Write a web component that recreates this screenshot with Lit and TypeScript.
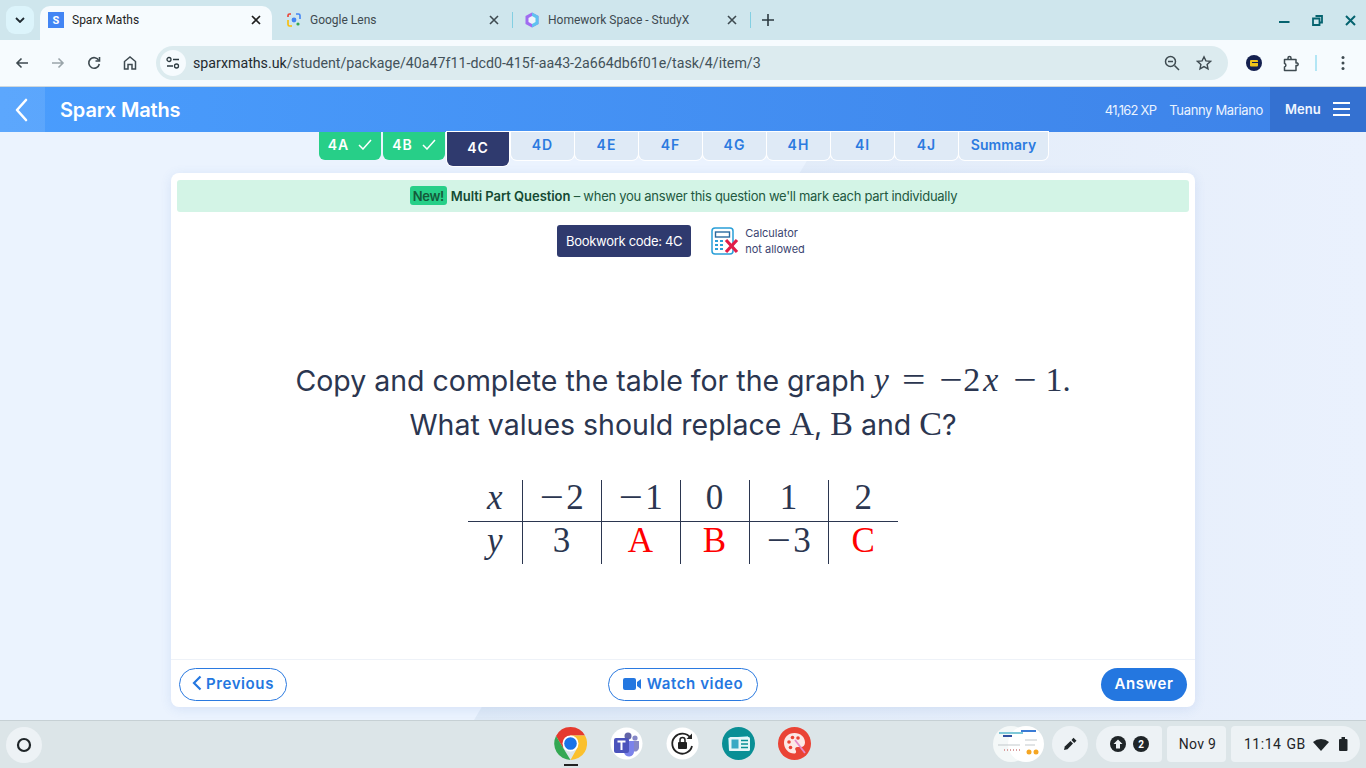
import { LitElement, html, css, svg } from "lit";
import { customElement } from "lit/decorators.js";

const ic = (w: number, h: number, body: unknown, vb = `0 0 ${w} ${h}`) =>
  html`<svg width=${w} height=${h} viewBox=${vb} fill="none" style="display:block;flex:none">${body}</svg>`;

@customElement("app-root")
export class AppRoot extends LitElement {
  static styles = css`
    :host { display: flex; flex-direction: column; width: 1366px; height: 768px; overflow: hidden; font-family: "Roboto", sans-serif; color: #1f1f1f; }
    .tabstrip { height: 40px; background: #cfe6ed; display: flex; align-items: flex-end; flex: none; position: relative; }
    .tabdrop { width: 28px; height: 28px; margin: 0 0 6px 6px; background: #dcf4fb; border-radius: 9px; display: flex; align-items: center; justify-content: center; flex: none; }
    .tab { height: 34px; display: flex; align-items: center; font-size: 12px; color: #3e4a50; flex: none; box-sizing: border-box; padding-bottom: 6px; }
    .tab.active { width: 232px; margin-left: 6px; background: #f6fbfe; border-radius: 10px 10px 0 0; color: #1f1f1f; padding: 0 11px 6px 8px; }
    .tab.active .fav { background: #4285f4; color: #fff; width: 16px; height: 16px; font: 700 11px "Roboto"; display: flex; align-items: center; justify-content: center; margin-right: 8px; }
    .tab.t2 { width: 240px; padding-left: 15px; padding-right: 13px; }
    .tab.t3 { width: 237px; padding-left: 12px; padding-right: 13px; }
    .tab .fav2 { margin-right: 9px; }
    .tab .title { flex: 1; white-space: nowrap; }
    .sep { width: 1px; height: 16px; background: #83cfe2; flex: none; margin-bottom: 12px; }
    .plus { margin: 0 0 14px 11px; }
    .winctl { position: absolute; right: 0; top: 0; height: 40px; display: flex; align-items: center; }
    .winctl span { display: flex; width: 32px; justify-content: center; }
    .winctl span.min { margin-right: 1px; }
    .winctl span.max { margin-right: 1px; }
    .toolbar { height: 47px; background: #f6fbfe; display: flex; align-items: center; flex: none; box-sizing: border-box; border-bottom: 1px solid #cfd8dc; position: relative; }
    .navs { display: flex; width: 156px; flex: none; padding-left: 14px; box-sizing: border-box; gap: 20px; align-items: center; }
    .omni { width: 1072px; height: 34px; border-radius: 17px; background: #dcebef; display: flex; align-items: center; flex: none; box-sizing: border-box; padding: 0 16px 0 4px; }
    .omni .tune { width: 26px; height: 26px; border-radius: 50%; background: #f6fbfe; display: flex; align-items: center; justify-content: center; margin-right: 7px; }
    .url { flex: 1; font-size: 14.22px; color: #43525a; white-space: nowrap; }
    .url b { font-weight: 400; color: #1f2a30; }
    .omni .icons { display: flex; gap: 16px; align-items: center; }
    .tright { display: flex; align-items: center; margin-left: 18px; }
    .avatar { width: 16px; height: 16px; border-radius: 50%; background: #14204f; display: flex; align-items: center; justify-content: center; }
    .tspace { width: 21px; }
    .vsep { width: 2px; height: 16px; background: #b3e6f5; margin: 0 24px 0 15px; }

    .app { flex: 1; position: relative; display: flex; flex-direction: column; min-height: 0; font-family: "Inter", sans-serif; background: #ebf3fe; overflow: hidden; }
    .bgshape { position: absolute; left: 0; top: 45px; width: 1366px; height: 588px; }
    .topbar { height: 45px; flex: none; display: flex; align-items: stretch; color: #fff; background: linear-gradient(90deg, #4a9dfd 0%, #3d82e8 100%); position: relative; z-index: 2; }
    .back { width: 45px; background: rgba(255,255,255,.1); display: flex; align-items: center; justify-content: center; flex: none; padding-right: 3px; box-sizing: border-box; }
    .brand { font-size: 20px; font-weight: 600; letter-spacing: -0.15px; margin-left: 15px; align-self: center; flex: 1; }
    .xp, .user { align-self: center; font-size: 13px; color: #eaf3ff; letter-spacing: -0.35px; }
    .xp { letter-spacing: -0.75px; }
    .user { margin: 0 7px 0 13px; }
    .menu { width: 96px; background: #3471d1; display: flex; align-items: center; justify-content: space-between; padding: 0 15px 1px; box-sizing: border-box; font-size: 13px; font-weight: 600; color: #f0f6ff; }
    .tabs { display: flex; flex: none; height: 34px; gap: 1px; padding-left: 319px; position: relative; z-index: 2; align-items: flex-start; font-weight: 600; font-size: 14px; letter-spacing: 1px; }
    .stab { box-sizing: border-box; width: 63px; height: 28px; padding-bottom: 3px; background: #dfeaf6; color: #2b7ae0; display: flex; align-items: center; justify-content: center; border-radius: 0 0 6px 6px; box-shadow: 0 0 0 1px #fff; }
    .stab.done { width: 62px; margin-right: 1px; background: #27cf88; color: #fff; gap: 9px; box-shadow: none; }
    .stab.cur { width: 62px; margin-right: 1px; background: #2f3a6e; color: #fff; height: 34px; }
    .stab.sum { width: 89px; letter-spacing: 0.1px; }
    .card { position: relative; z-index: 2; margin: 7px 0 0 171px; width: 1024px; height: 534px; background: #fff; border-radius: 8px; box-shadow: 0 2px 12px rgba(60,110,200,.12); display: flex; flex-direction: column; box-sizing: border-box; }
    .banner { margin: 7px 6px 0 6px; height: 32px; padding: 0 0 1px 1px; box-sizing: border-box; background: #d3f4e6; border-radius: 3px; display: flex; align-items: center; justify-content: center; font-size: 13px; color: #22593f; letter-spacing: -0.28px; flex: none; white-space: pre; }
    .new { background: #27cf88; color: #145a3a; border-radius: 3px; font-weight: 600; padding: 0 1px; height: 19px; width: 37px; box-sizing: border-box; display: flex; align-items: center; justify-content: center; margin-right: 4px; letter-spacing: -0.3px; }
    .banner strong { font-weight: 600; color: #144a33; letter-spacing: -0.05px; }
    .book { display: flex; justify-content: center; align-items: center; margin-top: 13px; height: 32px; padding-right: 4px; flex: none; }
    .code { width: 134px; height: 32px; background: #2f3a6e; color: #fff; border-radius: 3px; font-size: 13px; display: flex; align-items: center; justify-content: center; letter-spacing: -0.3px; }
    .calc { display: flex; align-items: center; margin-left: 20px; gap: 5px; }
    .calc div { font-size: 11px; line-height: 16px; color: #3a4470; }
    .q { flex: 1; display: flex; flex-direction: column; align-items: center; padding-top: 102px; color: #2b3650; font-size: 28.5px; line-height: 44px; min-height: 0; }
    .q div { white-space: pre; }
    .m { font-family: "Liberation Serif", serif; font-size: 34px; line-height: 0; }
    .mi { font-style: italic; }
    .op { display: inline-block; transform: scaleX(1.22); line-height: 0; }
    .eq { margin-left: 15px; }
    .neg { margin-left: 18px; }
    .two { margin-left: 3px; }
    .xv { margin-left: 3px; }
    .neg2 { margin-left: 17px; }
    .one { margin-left: 11px; }
    table { border-collapse: collapse; margin-top: 33px; font-family: "Liberation Serif", serif; font-size: 35px; color: #2b3650; line-height: 34px; }
    td { padding: 0 0 4px; text-align: center; border-left: 1px solid #2b3650; box-sizing: border-box; }
    td .op { margin: 0 4px 0 3px; }
    tr:first-child td { height: 41px; border-bottom: 1px solid #2b3650; }
    tr:last-child td { height: 43px; }
    td:first-child { border-left: none; width: 54px; font-style: italic; }
    .r { color: #f00; }
    .foot { height: 46px; padding: 1px 8px 0; flex: none; border-top: 1px solid #eef2f8; display: flex; align-items: center; justify-content: space-between; position: relative; }
    .btn { height: 33px; padding-bottom: 2px; box-sizing: border-box; border: 1px solid #2b7ae0; border-radius: 17px; color: #2477e0; font-size: 15px; font-weight: 600; letter-spacing: 0.6px; display: flex; align-items: center; justify-content: center; background: #fff; }
    .prev { width: 108px; gap: 4px; }
    .watch { width: 150px; gap: 6px; position: absolute; left: 437px; top: 8px; }
    .ans { width: 86px; background: #2477e0; color: #fff; border: none; }

    .shelf { height: 48px; flex: none; background: #dce5e8; border-top: 1px solid #c6d0d4; box-sizing: border-box; position: relative; display: flex; align-items: center; }
    .launcher { width: 36px; height: 36px; border-radius: 50%; background: #edf2f5; margin-left: 6px; display: flex; align-items: center; justify-content: center; flex: none; }
    .apps { position: absolute; left: 554px; top: 6px; display: flex; gap: 23px; }
    .app-i { width: 33px; height: 33px; position: relative; flex: none; }
    .app-i svg { display: block; }
    .run { position: absolute; left: 564px; top: 43px; width: 14px; height: 2px; background: #222; }
    .tray { position: absolute; right: 6px; top: 5px; height: 36px; display: flex; gap: 5px; align-items: center; color: #1f2528; font-size: 14px; font-family: "Roboto", sans-serif; }
    .pill { height: 36px; background: #edf2f5; display: flex; align-items: center; justify-content: center; box-sizing: border-box; }
    .thumb { width: 51px; height: 36px; margin-right: 3px; }
    .pen { width: 36px; border-radius: 18px; margin-right: 3px; }
    .up { width: 66px; border-radius: 18px 4px 4px 18px; gap: 7px; }
    .date { width: 59px; border-radius: 4px; letter-spacing: .3px; padding-left: 2px; }
    .time { width: 129px; border-radius: 4px 18px 18px 4px; justify-content: flex-start; padding-left: 13px; letter-spacing: .5px; }
    .gb { margin-left: 5px; margin-right: 7px; }
    .bat { margin-left: 10px; }
  `;

  render() {
    return html`
      <div class="tabstrip">
        <div class="tabdrop">${ic(10, 6, svg`<path d="M1 1l4 4 4-4" stroke="#1f2a30" stroke-width="1.8"/>`)}</div>
        <div class="tab active"><span class="fav">S</span><span class="title">Sparx Maths</span>
          ${ic(10, 10, svg`<path d="M1 1l8 8M9 1l-8 8" stroke="#1f1f1f" stroke-width="1.7"/>`)}</div>
        <div class="tab t2"><span class="fav2">${ic(14, 14, svg`
            <path d="M4 1H2.500A1.500 1.500 0 0 0 1 2.500V4" stroke="#ea4335" stroke-width="1.6"/>
            <path d="M1 7v4.500A1.500 1.500 0 0 0 2.500 13H5" stroke="#fbbc04" stroke-width="1.6"/>
            <path d="M9 1h2.500A1.500 1.500 0 0 1 13 2.500V6" stroke="#4285f4" stroke-width="1.6"/>
            <circle cx="7" cy="7" r="2.400" fill="#4285f4"/><circle cx="11" cy="11" r="1.600" fill="#34a853"/>`)}</span>
          <span class="title">Google Lens</span>
          ${ic(10, 10, svg`<path d="M1 1l8 8M9 1l-8 8" stroke="#3e4a50" stroke-width="1.6"/>`)}</div>
        <div class="sep"></div>
        <div class="tab t3"><span class="fav2">${ic(14, 16, svg`
            <path d="M7 .5l6.500 3.500v8L7 15.500.5 12V4z" fill="#a06cf0"/><path d="M7 .5l6.500 3.500v8L7 15.500z" fill="#5ec3f0"/>
            <path d="M7 4l3.500 2v4L7 12l-3.500-2V6z" fill="#eef6fb"/>`)}</span>
          <span class="title">Homework Space - StudyX</span>
          ${ic(10, 10, svg`<path d="M1 1l8 8M9 1l-8 8" stroke="#3e4a50" stroke-width="1.6"/>`)}</div>
        <div class="sep"></div>
        <div class="plus">${ic(12, 12, svg`<path d="M6 0v12M0 6h12" stroke="#2c3a40" stroke-width="1.600"/>`)}</div>
        <div class="winctl">
          <span class="min">${ic(11, 11, svg`<path d="M0 6h10.500" stroke="#05636f" stroke-width="2"/>`, "0 -1 11 11")}</span>
          <span class="max">${ic(11, 11, svg`<path d="M3.500 1h6.500v6.500H8M1 3.500h6.500V10H1z" stroke="#05636f" stroke-width="1.800"/>`)}</span>
          <span>${ic(11, 11, svg`<path d="M1 1l9 9M10 1l-9 9" stroke="#05636f" stroke-width="2"/>`)}</span>
        </div>
      </div>
      <div class="toolbar">
        <div class="navs">
          ${ic(16, 16, svg`<path d="M14 8H3M7.500 3.500L3 8l4.500 4.500" stroke="#3e4a50" stroke-width="1.600"/>`)}
          ${ic(16, 16, svg`<path d="M2 8h11M8.500 3.500L13 8l-4.500 4.500" stroke="#9aa5aa" stroke-width="1.600"/>`)}
          ${ic(16, 16, svg`<path d="M12.800 5.500A5.300 5.300 0 1 0 13.300 9" stroke="#3e4a50" stroke-width="1.600"/><path d="M13.500 2v4h-4" stroke="#3e4a50" stroke-width="1.600"/>`)}
          ${ic(16, 16, svg`<path d="M2.500 14V6.500L8 2l5.500 4.500V14H10V9.500H6V14z" stroke="#3e4a50" stroke-width="1.500"/>`)}
        </div>
        <div class="omni">
          <div class="tune">${ic(14, 14, svg`<circle cx="3" cy="3.500" r="2" stroke="#2c3a40" stroke-width="1.300"/><path d="M7 3.500h6M1 10h6" stroke="#2c3a40" stroke-width="1.500"/><circle cx="10.500" cy="10" r="2" stroke="#2c3a40" stroke-width="1.300"/>`)}</div>
          <div class="url"><b>sparxmaths.uk</b>/student/package/40a47f11-dcd0-415f-aa43-2a664db6f01e/task/4/item/3</div>
          <div class="icons">
            ${ic(16, 16, svg`<circle cx="6.500" cy="6.500" r="5" stroke="#3e4a50" stroke-width="1.500"/><path d="M4 6.500h5M10.500 10.500L15 15" stroke="#3e4a50" stroke-width="1.500"/>`)}
            ${ic(16, 16, svg`<path d="M8 1.800l1.900 4.100 4.500.5-3.300 3 .9 4.400L8 11.600l-4 2.200.9-4.400-3.300-3 4.500-.5z" stroke="#3e4a50" stroke-width="1.400"/>`)}
          </div>
        </div>
        <div class="tright">
          <div class="avatar">${ic(8, 8, svg`<rect y="1" width="8" height="6.500" rx="1" fill="#f0c419"/><rect x="2" y="3" width="6" height="1" fill="#14204f"/>`)}</div>
          <span class="tspace"></span>
          ${ic(17, 17, svg`<path d="M1.500 4.500h11.500V8h1.500a1.500 1.500 0 0 1 0 2.500H13V15.500H1.500v-3.500a1.800 1.800 0 0 0 0-3.500z" stroke="#3e4a50" stroke-width="1.500" stroke-linejoin="round"/><path d="M5 4.500V3a1.500 1.500 0 0 1 3 0v1.500" stroke="#3e4a50" stroke-width="1.500"/>`)}
          <div class="vsep"></div>
          ${ic(4, 16, svg`<circle cx="2" cy="2.500" r="1.500" fill="#3e4a50"/><circle cx="2" cy="8" r="1.500" fill="#3e4a50"/><circle cx="2" cy="13.500" r="1.500" fill="#3e4a50"/>`)}
        </div>
      </div>

      <div class="app">
        <svg class="bgshape" viewBox="0 0 1366 588" fill="none">
          <defs><linearGradient id="sh" x1="474" y1="0" x2="1366" y2="0" gradientUnits="userSpaceOnUse"><stop offset="0" stop-color="#dee9f6"/><stop offset="1" stop-color="#eaf1fd"/></linearGradient></defs>
          <path d="M824 0H1366V588H474z" fill="url(#sh)"/>
        </svg>
        <div class="topbar">
          <div class="back">${ic(14, 24, svg`<path d="M12 2L3 12l9 10" stroke="#fff" stroke-width="2.600" stroke-linecap="round" stroke-linejoin="round"/>`)}</div>
          <div class="brand">Sparx Maths</div>
          <div class="xp">41,162 XP</div>
          <div class="user">Tuanny Mariano</div>
          <div class="menu">Menu ${ic(18, 16, svg`<path d="M0 2h17M0 8h17M0 14h17" stroke="#fff" stroke-width="2"/>`)}</div>
        </div>
        <div class="tabs">
          ${["4A", "4B"].map((t) => html`<div class="stab done">${t}${ic(14, 11, svg`<path d="M1 6l4 4 8-9" stroke="#fff" stroke-width="1.500"/>`)}</div>`)}
          <div class="stab cur">4C</div>
          ${["4D", "4E", "4F", "4G", "4H", "4I", "4J"].map((t) => html`<div class="stab">${t}</div>`)}
          <div class="stab sum">Summary</div>
        </div>
        <div class="card">
          <div class="banner"><span class="new">New!</span><strong>Multi Part Question</strong> – when you answer this question we'll mark each part individually</div>
          <div class="book">
            <div class="code">Bookwork code: 4C</div>
            <div class="calc">
              ${ic(29, 28, svg`
                <rect x="1" y="1" width="21" height="26" rx="3" stroke="#2a9fd8" stroke-width="1.500"/>
                <rect x="4.500" y="5" width="14" height="5" stroke="#2b6a9f" stroke-width="1.400"/>
                <path d="M4 14h3M9 14h3M4 18h3M9 18h3M4 22h3M9 22h3" stroke="#2a9fd8" stroke-width="1.800"/>
                <path d="M15 13l11 12M26 13L15 25" stroke="#e11d48" stroke-width="3.200"/>`)}
              <div>Calculator<br />not allowed</div>
            </div>
          </div>
          <div class="q">
            <div>Copy and complete the table for the graph <span class="m"><span class="mi">y</span><span class="op eq">=</span><span class="op neg">−</span><span class="two">2</span><span class="mi xv">x</span><span class="op neg2">−</span><span class="one">1</span></span>.</div>
            <div>What values should replace <span class="m">A</span>, <span class="m">B</span> and <span class="m">C</span>?</div>
            <table>
              <tr><td>x</td><td style="width:79px"><span class="op">−</span>2</td><td style="width:79px"><span class="op">−</span>1</td><td style="width:69px">0</td><td style="width:79px">1</td><td style="width:70px">2</td></tr>
              <tr><td>y</td><td>3</td><td class="r">A</td><td class="r">B</td><td><span class="op">−</span>3</td><td class="r">C</td></tr>
            </table>
          </div>
          <div class="foot">
            <div class="btn prev">${ic(10, 16, svg`<path d="M8.500 1.500L2 8l6.500 6.500" stroke="#2477e0" stroke-width="2.200"/>`)}Previous</div>
            <div class="btn watch">${ic(18, 12, svg`<rect width="13" height="12" rx="2" fill="#2477e0"/><path d="M14 4l4-3v10l-4-3z" fill="#2477e0"/>`)}Watch video</div>
            <div class="btn ans">Answer</div>
          </div>
        </div>
      </div>

      <div class="shelf">
        <div class="launcher">${ic(16, 16, svg`<circle cx="8" cy="8" r="6" stroke="#1f2528" stroke-width="2.200"/>`)}</div>
        <div class="apps">
          <div class="app-i">${ic(33, 33, svg`
            <path d="M16.500 0A16.500 16.500 0 0 1 31 8.500H16.500L9 21 2 9A16.500 16.500 0 0 1 16.500 0z" fill="#e5392e"/>
            <path d="M2 9l7.500 12.500 7 11.500A16.500 16.500 0 0 1 2 9z" fill="#34a853"/>
            <path d="M31 8.500A16.500 16.500 0 0 1 16.500 33l7-12.500-7-12z" fill="#fbc02d"/>
            <circle cx="16.500" cy="16.500" r="8" fill="#fff"/><circle cx="16.500" cy="16.500" r="6.300" fill="#1a73e8"/>`)}</div>
          <div class="app-i">${ic(33, 33, svg`
            <circle cx="16.500" cy="16.500" r="16" fill="#fff"/>
            <circle cx="18" cy="9" r="3.500" fill="#6264a7"/><circle cx="25" cy="11" r="2.600" fill="#8688c7"/>
            <path d="M21 14h8v7a4 4 0 0 1-6 3z" fill="#8688c7"/><path d="M13 14h11v10a5 5 0 0 1-10 1z" fill="#7b83eb"/>
            <rect x="4" y="11" width="15" height="15" rx="2" fill="#4b53bc"/>
            <path d="M7.500 14.500h8M11.500 14.500V23" stroke="#fff" stroke-width="2"/>`)}</div>
          <div class="app-i">${ic(33, 33, svg`
            <circle cx="16.500" cy="16.500" r="16" fill="#fff"/>
            <path d="M24.500 11A10 10 0 1 0 26 19" stroke="#222" stroke-width="1.800"/><path d="M26 6.500V12h-5.500" fill="#222"/>
            <rect x="12" y="15" width="9" height="7" rx="1" fill="#222"/><path d="M14 15v-2a2.500 2.500 0 0 1 5 0v2" stroke="#222" stroke-width="1.500"/>`)}</div>
          <div class="app-i">${ic(33, 33, svg`
            <circle cx="16.500" cy="16.500" r="16.500" fill="#0a8f95"/>
            <path d="M6 11l20-2 1 13-20 2z" fill="#8fd3e0"/><rect x="7" y="10" width="21" height="14" rx="1.500" fill="#e8f6f8"/>
            <rect x="9.500" y="12.500" width="7" height="9" fill="#39a9c4"/><path d="M19 13.500h7M19 17h7M19 20.500h7" stroke="#0a8f95" stroke-width="1.600"/>`)}</div>
          <div class="app-i">${ic(33, 33, svg`
            <circle cx="16.500" cy="16.500" r="16.500" fill="#ea4335"/>
            <path d="M16.500 6C10 6 6 10.500 6 16s4.500 10.500 10 10.500c2.500 0 2.500-2 1.500-3.500s0-3 2-3h3.500c2.500 0 4-2 4-4.500C27 10 22.500 6 16.500 6z" fill="#fce8e6"/>
            <circle cx="11" cy="15" r="1.800" fill="#ea4335"/><circle cx="14.500" cy="10.500" r="1.800" fill="#ea4335"/><circle cx="20" cy="11" r="1.800" fill="#ea4335"/><circle cx="12.500" cy="20.500" r="1.800" fill="#ea4335"/>
            <path d="M17 13l10 13" stroke="#e58acb" stroke-width="1.800"/>`)}</div>
        </div>
        <div class="run"></div>
        <div class="tray">
          <div class="thumb">${ic(51, 36, svg`
            <circle cx="18" cy="18" r="18" fill="#f4f8f8"/><circle cx="33" cy="18" r="18" fill="#fff"/>
            <path d="M6 7h24" stroke="#7fc8d8" stroke-width="2"/><path d="M28 5h15" stroke="#3a7bd5" stroke-width="2"/><path d="M10 10h9" stroke="#2f4f9f" stroke-width="2"/>
            <path d="M5 19h22M32 14h12M32 19h10" stroke="#c3c9cc" stroke-width="1"/>
            <path d="M11 24h16" stroke="#d9a0a0" stroke-width="2" stroke-dasharray="1 2"/>
            <circle cx="36" cy="26" r="2.500" fill="#f5a623"/><circle cx="43" cy="26" r="2.500" fill="#f5a623"/>`)}</div>
          <div class="pill pen">${ic(14, 14, svg`<path d="M1 13l.8-3.500L7.500 4l2.500 2.500-5.500 5.700z" fill="#1f2528"/><path d="M8.500 3l2-2.200 3 3L11.200 6z" fill="#1f2528"/>`)}</div>
          <div class="pill up">
            ${ic(16, 16, svg`<circle cx="8" cy="8" r="8" fill="#1f2528"/><path d="M8 3.500L12.500 8H10v4.500H6V8H3.500z" fill="#edf2f5"/>`)}
            <svg width="16" height="16" viewBox="0 0 16 16" style="display:block"><circle cx="8" cy="8" r="8" fill="#1f2528"/><text x="8" y="11.500" text-anchor="middle" font-size="10" font-weight="700" font-family="Roboto" fill="#fff">2</text></svg>
          </div>
          <div class="pill date">Nov 9</div>
          <div class="pill time"><span>11:14</span><span class="gb">GB</span>
            ${ic(16, 13, svg`<path d="M0 4a12 12 0 0 1 16 0L8 13z" fill="#1f2528"/>`)}
            <span class="bat">${ic(9, 14, svg`<rect y="2" width="8.500" height="12" rx="1" fill="#1f2528"/><rect x="2.500" width="3.500" height="2" fill="#1f2528"/>`)}</span>
          </div>
        </div>
      </div>
    `;
  }
}
